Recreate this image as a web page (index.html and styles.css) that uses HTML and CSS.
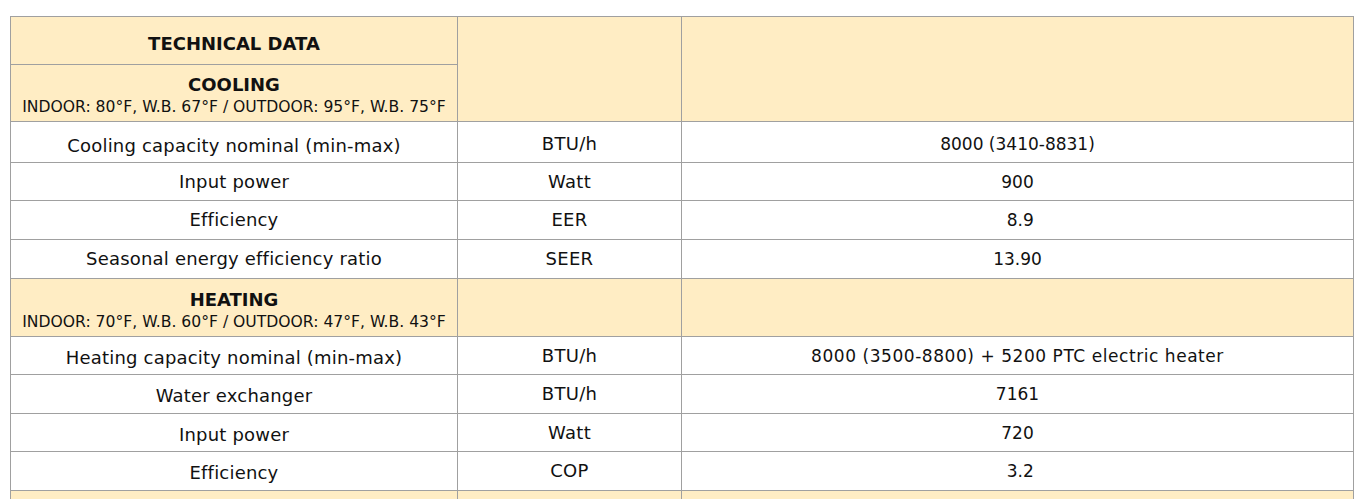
FILE: index.html
```html
<!DOCTYPE html>
<html>
<head>
<meta charset="utf-8">
<link rel="stylesheet" href="styles.css">
</head>
<body>
<table class="spec">
  <colgroup>
    <col class="c1"><col class="c2"><col class="c3">
  </colgroup>
  <tr class="h1">
    <td class="head"><b>TECHNICAL DATA</b></td>
    <td class="head" rowspan="2"></td>
    <td class="head" rowspan="2"></td>
  </tr>
  <tr class="h2">
    <td class="head"><b>COOLING</b><span class="cond">INDOOR: 80°F, W.B. 67°F / OUTDOOR: 95°F, W.B. 75°F</span></td>
  </tr>
  <tr class="r41 low"><td class="lbl">Cooling capacity nominal (min-max)</td><td class="unit">BTU/h</td><td>8000 (3410-8831)</td></tr>
  <tr class="r38"><td class="lbl flat">Input power</td><td class="unit">Watt</td><td>900</td></tr>
  <tr class="r39"><td class="lbl flat">Efficiency</td><td class="unit">EER</td><td>&nbsp;8.9</td></tr>
  <tr class="r39"><td class="lbl flat">Seasonal energy efficiency ratio</td><td class="unit">SEER</td><td>13.90</td></tr>
  <tr class="h3">
    <td class="head"><b>HEATING</b><span class="cond">INDOOR: 70°F, W.B. 60°F / OUTDOOR: 47°F, W.B. 43°F</span></td>
    <td class="head"></td>
    <td class="head"></td>
  </tr>
  <tr class="r38"><td class="lbl">Heating capacity nominal (min-max)</td><td class="unit">BTU/h</td><td class="long">8000 (3500-8800) + 5200 PTC electric heater</td></tr>
  <tr class="r39"><td class="lbl">Water exchanger</td><td class="unit">BTU/h</td><td>7161</td></tr>
  <tr class="r38"><td class="lbl">Input power</td><td class="unit">Watt</td><td>720</td></tr>
  <tr class="r39"><td class="lbl">Efficiency</td><td class="unit">COP</td><td>&nbsp;3.2</td></tr>
  <tr class="h3">
    <td class="head"></td>
    <td class="head"></td>
    <td class="head"></td>
  </tr>
</table>
</body>
</html>
```
FILE: styles.css
```css
html, body {
  margin: 0;
  padding: 0;
  background: #ffffff;
}
body {
  font-family: "DejaVu Sans", sans-serif;
  color: #111111;
}
.spec {
  margin: 16px 0 0 10px;
  border-collapse: collapse;
  table-layout: fixed;
  width: 1343px;
}
.c1 { width: 447px; }
.c2 { width: 224px; }
.c3 { width: 672px; }
.spec td {
  border: 1px solid #a0a0a0;
  padding: 0;
  text-align: center;
  vertical-align: middle;
  font-size: 17px;
  line-height: 20px;
}
.spec td.head {
  background: #ffedc4;
  padding-top: 7px;
}
.spec td.lbl {
  padding-top: 4px;
  font-size: 18px;
  letter-spacing: 0.2px;
}
.spec td.lbl.flat {
  padding-top: 0;
}
.spec td.unit {
  font-size: 18px;
  letter-spacing: 0.3px;
}
.spec td.long {
  letter-spacing: 0.55px;
}
.spec .low td {
  padding-top: 4px;
}
.spec .low td.lbl {
  padding-top: 8px;
}
.head b {
  display: block;
  font-size: 18px;
  line-height: 22px;
}
.cond {
  display: block;
  font-size: 15.6px;
  line-height: 23px;
}
.h1 { height: 48px; }
.h2 { height: 57px; }
.h3 { height: 58px; }
.r41 { height: 41px; }
.r38 { height: 38px; }
.r39 { height: 39px; }
```
